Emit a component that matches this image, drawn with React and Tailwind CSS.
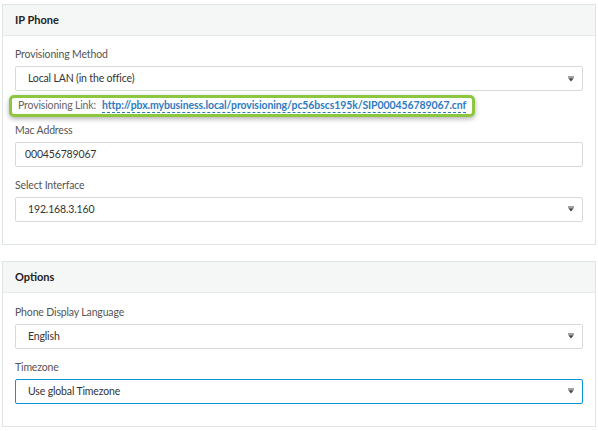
import React from 'react';

const Caret = () => (
  <svg className="w-[6px] h-[6px]" viewBox="0 0 6 6">
    <rect x="0" y="0.5" width="6" height="1" fill="#444" />
    <path d="M0.3 2.2 L5.7 2.2 L3 5.5 Z" fill="#444" />
  </svg>
);

const SelectBox = ({ value, focused }) => (
  <div
    className={`h-[25px] flex items-center justify-between pl-[12px] pr-[8px] bg-white rounded-[2px] border ${
      focused ? 'border-[#0b93d5]' : 'border-[#d5dbdc]'
    }`}
  >
    <span className="text-[10.5px] tracking-[-0.15px] text-[#333]">{value}</span>
    <Caret />
  </div>
);

const Label = ({ children }) => (
  <div className="text-[10.5px] tracking-[-0.15px] leading-[14px] text-[#555] mb-[5px]">{children}</div>
);

const Panel = ({ title, children, className }) => (
  <div className={`mx-[2px] border border-[#dfe4e5] bg-white ${className || ''}`}>
    <div className="h-[31px] flex items-center px-[12px] bg-[#f5f6f6] border-b border-[#e6eaea]">
      <span className="text-[11px] font-bold text-[#222]">{title}</span>
    </div>
    {children}
  </div>
);

export default function App() {
  return (
    <div className="w-[598px] h-[431px] bg-white pt-[4px] font-['Lato','Open_Sans',sans-serif]">
      <Panel title="IP Phone">
        <div className="px-[12px] pt-[11px] pb-[22px]">
          <Label>Provisioning Method</Label>
          <SelectBox value="Local LAN (in the office)" />

          <div className="mt-[1px] ml-[-6px] inline-flex items-center h-[22px] px-[6px] border-[3px] border-[#8dc63f] rounded-[5px] shadow-[0_2px_5px_rgba(0,0,0,0.3)] bg-white">
            <span className="text-[10.5px] tracking-[-0.15px] text-[#666] mr-[6px]">Provisioning Link:</span>
            <span className="text-[10.5px] tracking-[-0.1px] font-bold text-[#2f7bbf] border-b border-dashed border-[#2f7bbf] leading-[13px]">
              http://pbx.mybusiness.local/provisioning/pc56bscs195k/SIP000456789067.cnf
            </span>
          </div>

          <div className="mt-[6px]">
            <Label>Mac Address</Label>
            <div className="h-[25px] flex items-center pl-[9px] border border-[#d5dbdc] rounded-[2px]">
              <span className="text-[10.5px] tracking-[-0.15px] text-[#333]">000456789067</span>
            </div>
          </div>

          <div className="mt-[11px]">
            <Label>Select Interface</Label>
            <SelectBox value="192.168.3.160" />
          </div>
        </div>
      </Panel>

      <Panel title="Options" className="mt-[16px]">
        <div className="px-[12px] pt-[12px] pb-[22px]">
          <Label>Phone Display Language</Label>
          <SelectBox value="English" />
          <div className="mt-[11px]">
            <Label>Timezone</Label>
            <SelectBox value="Use global Timezone" focused />
          </div>
        </div>
      </Panel>
    </div>
  );
}
